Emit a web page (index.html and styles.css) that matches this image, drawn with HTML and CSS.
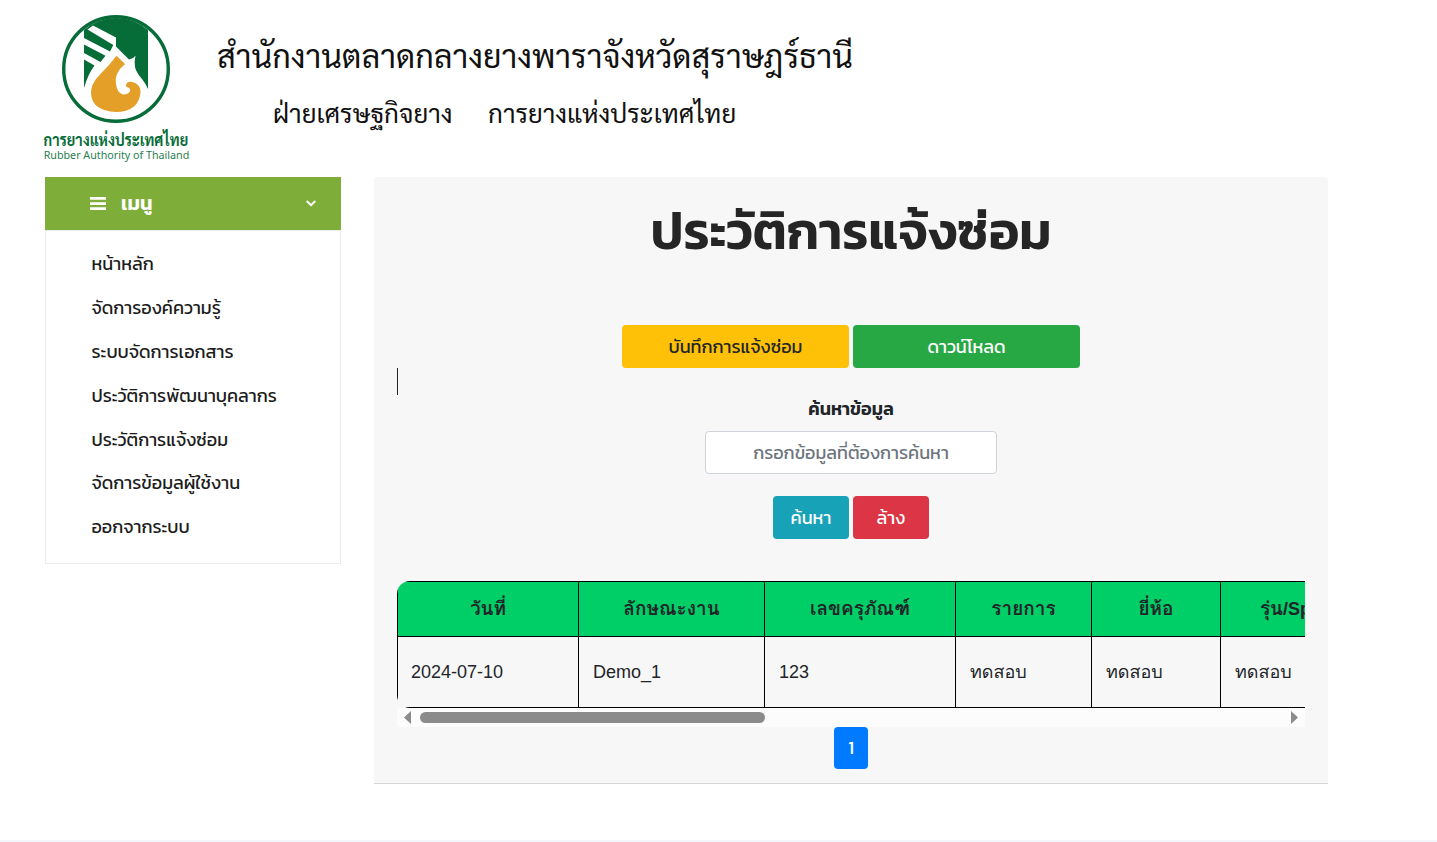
FILE: index.html
```html
<!DOCTYPE html>
<html lang="th">
<head>
<meta charset="utf-8">
<title>ประวัติการแจ้งซ่อม</title>
<link rel="stylesheet" href="styles.css">
</head>
<body>
<header class="header">
  <div class="brand">
    <svg class="emblem" viewBox="0 0 108 108" width="108" height="108">
      <circle cx="54" cy="54" r="52.300" fill="#fff" stroke="#066c38" stroke-width="3.400"/>
      <path fill="#066c38" d="M22 15Q36 3 54 3Q72 3 86 15V74Q84 69 80 64Q74 57 73 52Q72 46 73.500 40.700Q71 44 67 44.500L54 31.500V22.500L31 10.500L25.500 14.500L51.300 30L48 36.500L22 23ZM22 29.500L43.500 40.700L38.500 47L22 38ZM22 44.500L32.500 50.500Q26 59 22 73Z"/>
      <path fill="#e39f27" d="M54.500 40.700L63 49Q52 58 54 69Q55 78 61 79.500Q67 79.500 68.300 75.500Q68 72.500 65 72Q62.500 70 65.500 67.500Q69 65.500 74 68.500Q78.500 71 78.500 77Q78 86 72 91.500Q65 97 54 97Q42 97 34 90.500Q29 85 29 77.500Q29 71 34 64Q43 54 47 50Z"/>
    </svg>
    <div class="brand-th"><span>การยางแห่งประเทศไทย</span></div>
    <div class="brand-en"><span>Rubber Authority of Thailand</span></div>
  </div>
  <div class="titles">
    <div class="office"><span>สำนักงานตลาดกลางยางพาราจังหวัดสุราษฎร์ธานี</span></div>
    <div class="dept"><span class="dept-a">ฝ่ายเศรษฐกิจยาง</span><span class="dept-b">การยางแห่งประเทศไทย</span></div>
  </div>
</header>
<main class="layout">
  <nav class="menu">
    <div class="menu-head">
      <svg width="16" height="13" viewBox="0 0 16 13"><path fill="#fff" d="M0 0h16v2.700H0zM0 5.200h16v2.700H0zM0 10.300h16V13H0z"/></svg>
      <b class="menu-title">เมนู</b>
      <svg class="chevron" width="10" height="7" viewBox="0 0 10 7"><path fill="none" stroke="#fff" stroke-width="2" d="M.7 1L5 5.200 9.300 1"/></svg>
    </div>
    <ul class="menu-list">
      <li>หน้าหลัก</li>
      <li>จัดการองค์ความรู้</li>
      <li>ระบบจัดการเอกสาร</li>
      <li>ประวัติการพัฒนาบุคลากร</li>
      <li>ประวัติการแจ้งซ่อม</li>
      <li>จัดการข้อมูลผู้ใช้งาน</li>
      <li>ออกจากระบบ</li>
    </ul>
  </nav>
  <section class="panel">
    <h1 class="heading"><span>ประวัติการแจ้งซ่อม</span></h1>
    <div class="actions">
      <a class="btn wide yellow"><span>บันทึกการแจ้งซ่อม</span></a>
      <a class="btn wide green"><span>ดาวน์โหลด</span></a>
    </div>
    <div class="rule"></div>
    <label class="label"><span>ค้นหาข้อมูล</span></label>
    <div class="field"><span>กรอกข้อมูลที่ต้องการค้นหา</span></div>
    <div class="buttons">
      <a class="btn small teal"><span>ค้นหา</span></a>
      <a class="btn small red"><span>ล้าง</span></a>
    </div>
    <div class="scroller">
      <table class="table">
        <colgroup><col class="c1"><col class="c2"><col class="c3"><col class="c4"><col class="c5"><col class="c6"></colgroup>
        <tr><th>วันที่</th><th>ลักษณะงาน</th><th>เลขครุภัณฑ์</th><th>รายการ</th><th>ยี่ห้อ</th><th>รุ่น<span class="latin">/Spec</span></th></tr>
        <tr><td>2024-07-10</td><td>Demo_1</td><td>123</td><td>ทดสอบ</td><td>ทดสอบ</td><td>ทดสอบ</td></tr>
      </table>
    </div>
    <div class="scrollbar">
      <svg width="7" height="13" viewBox="0 0 7 13"><path fill="#8b8b8b" d="M7 0v13L0 6.500z"/></svg>
      <div class="thumb"></div>
      <svg width="7" height="13" viewBox="0 0 7 13"><path fill="#8b8b8b" d="M0 0v13l7-6.500z"/></svg>
    </div>
    <div class="pager"><a class="page">1</a></div>
  </section>
</main>
<footer class="footer"></footer>
</body>
</html>
```
FILE: styles.css
```css
* { box-sizing: border-box; }
body { margin: 0; height: 842px; overflow: hidden; display: flex; flex-direction: column; background: #fff; color: #212529; font: 18px/27px Kanit, "Noto Sans Thai", "Noto Sans", sans-serif; white-space: nowrap; }
span { display: inline-block; }
svg { display: block; flex: none; }
.header { display: flex; height: 177px; flex: none; }
.brand { width: 148px; margin-left: 42px; padding-top: 15px; display: flex; flex-direction: column; align-items: center; }
.brand-th { color: #066c38; font-family: Sarabun, sans-serif; font-size: 16px; font-weight: 700; line-height: 18px; margin-top: 8px; }
.brand-th span { transform: scaleX(.905); }
.brand-en { color: #28804f; font-family: "Noto Sans", sans-serif; font-size: 11.400px; line-height: 12px; }
.brand-en span { transform: scaleX(.94); }
.titles { margin-left: 27px; color: #111; font-family: Sarabun, sans-serif; }
.office { font-size: 32.400px; line-height: 50px; padding-top: 30px; }
.dept { display: flex; font-size: 25.900px; line-height: 40px; margin: 12px 0 0 56px; }
.dept-a { width: 215px; }
.layout { display: flex; gap: 33px; margin-left: 45px; align-items: flex-start; }
.menu { width: 296px; }
.menu-head { height: 53px; background: #7fad39; color: #fff; display: flex; align-items: center; padding: 0 25px 0 45px; }
.menu-title { font-size: 20px; font-weight: 600; margin-left: 15px; }
.chevron { margin-left: auto; }
.menu-list { list-style: none; margin: 0; height: 334px; border: 1px solid #ebebeb; padding: 11.200px 0 0 45.500px; color: #1c1c1c; }
.menu-list li { height: 43.850px; line-height: 43.850px; }
.panel { width: 954px; height: 607px; background: #f7f7f7; border-bottom: 1px solid #d6d6d6; border-radius: 3px 3px 0 0; padding: 0 23px; display: flex; flex-direction: column; }
.heading { margin: 0; height: 148px; padding-top: 22px; line-height: 64px; font-size: 51.700px; font-weight: 600; text-align: center; color: #252525; }
.actions, .buttons { display: flex; justify-content: center; gap: 4px; }
.btn { height: 43px; line-height: 43px; border-radius: 4px; text-align: center; color: #fff; }
.wide { width: 227px; }
.small { width: 76px; }
.yellow { background: #ffc107; color: #212529; }
.green { background: #28a745; }
.teal { background: #17a2b8; }
.red { background: #dc3545; }
.rule { height: 27px; border-left: 1px solid #212529; }
.label { height: 27px; font-weight: 600; text-align: center; }
.field { width: 292px; height: 43px; margin: 9px auto 22px; line-height: 41px; border: 1px solid #ced4da; border-radius: 4px; background: #fff; color: #6c757d; text-align: center; }
.scroller { margin-top: 42px; overflow: hidden; height: 127px; border-radius: 13px 0 0 13px; flex: none; }
.table { border-collapse: collapse; table-layout: fixed; width: 973px; font-family: "Liberation Sans", Loma, sans-serif; font-size: 18px; }
.latin { font-size: 18px; }
.table th, .table td { border: 1px solid #000; }
.table th { height: 55px; padding: 0 0 1px; background: #00ce67; text-align: center; font-size: 19px; }
.table td { height: 71px; padding: 0 14px; }
.table td:first-child { padding-left: 13px; }
.c1 { width: 181px; }
.c2 { width: 186px; }
.c3 { width: 191px; }
.c4 { width: 136px; }
.c5 { width: 129px; }
.c6 { width: 150px; }
.scrollbar { display: flex; align-items: center; height: 19px; background: #fcfcfc; padding: 0 7px; flex: none; }
.thumb { width: 345px; height: 11px; border-radius: 6px; background: #8b8b8b; margin: 0 auto 0 9px; }
.pager { display: flex; justify-content: center; }
.page { width: 34px; height: 42px; line-height: 42px; text-align: center; color: #fff; background: #007bff; border-radius: 4px; }
.footer { height: 2px; background: #f3f6fa; margin-top: auto; }
```
